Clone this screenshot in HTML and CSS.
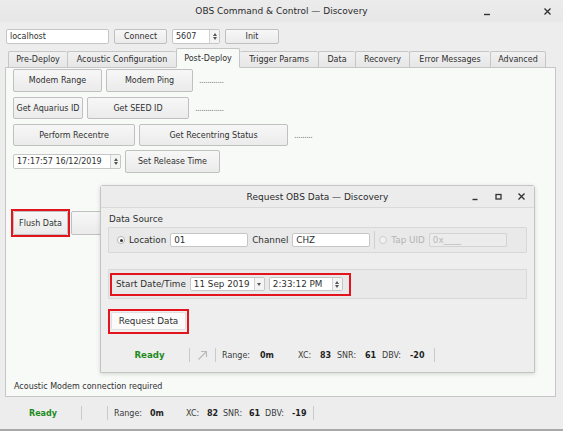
FILE: index.html
```html
<!DOCTYPE html>
<html lang="en">

<head>
    <meta charset="UTF-8">
    <title>OBS Command &amp; Control — Discovery</title>
    <link rel="stylesheet" href="styles.css">
</head>

<body>
    <div class="window">
        <!-- title bar -->
        <header class="titlebar">
            <span></span>
            <span class="title">OBS Command &amp; Control — Discovery</span>
            <span class="wctl">
                <svg width="9" height="9" viewBox="0 0 9 9"><path d="M1 7.5h6" stroke="#333" stroke-width="1.4"/></svg>
                <svg width="9" height="9" viewBox="0 0 9 9"><path d="M1.5 1.5l6 6M7.5 1.5l-6 6" stroke="#333" stroke-width="1.4"/></svg>
            </span>
        </header>

        <!-- connection row -->
        <div class="toolbar">
            <div class="field host">localhost</div>
            <div class="btn connect">Connect</div>
            <div class="spin port">
                <span class="val">5607</span>
                <span class="arrows"><i class="up"></i><i class="down"></i></span>
            </div>
            <div class="btn init">Init</div>
        </div>

        <!-- tabs -->
        <nav class="tabs">
            <span class="tab t59">Pre-Deploy</span>
            <span class="tab t109">Acoustic Configuration</span>
            <span class="tab on t64">Post-Deploy</span>
            <span class="tab t78">Trigger Params</span>
            <span class="tab t37">Data</span>
            <span class="tab t54">Recovery</span>
            <span class="tab t81">Error Messages</span>
            <span class="tab t56">Advanced</span>
        </nav>

        <section class="pane">
            <div class="row">
                <div class="btn w89">Modem Range</div>
                <div class="btn w87">Modem Ping</div>
                <span class="dots">............</span>
            </div>
            <div class="row r22">
                <div class="btn w70">Get Aquarius ID</div>
                <div class="btn w102">Get SEED ID</div>
                <span class="dots">..............</span>
            </div>
            <div class="row r22">
                <div class="btn w122">Perform Recentre</div>
                <div class="btn w149">Get Recentring Status</div>
                <span class="dots">.........</span>
            </div>
            <div class="row">
                <div class="spin dt">
                    <span class="val">17:17:57 16/12/2019</span>
                    <span class="arrows"><i class="up"></i><i class="down"></i></span>
                </div>
                <div class="btn w95">Set Release Time</div>
            </div>
            <div class="row flush">
                <div class="mark">
                    <div class="btn w55">Flush Data</div>
                </div>
                <div class="btn w60"></div>
            </div>
            <p class="note">Acoustic Modem connection required</p>
        </section>

        <!-- main status bar -->
        <footer class="status">
            <span class="ready">Ready</span>
            <span class="cell blank"></span>
            <span class="cell vals">
                <span class="k w36">Range:</span><b class="w36">0m</b>
                <span class="k w21">XC:</span><b class="w16">82</b>
                <span class="k w26">SNR:</span><b class="w16">61</b>
                <span class="k w27">DBV:</span><b class="w19">-19</b>
            </span>
        </footer>

        <!-- floating dialog -->
        <div class="dialog">
            <header class="dtitle">
                <span></span>
                <span class="title">Request OBS Data — Discovery</span>
                <span class="wctl">
                    <svg width="9" height="9" viewBox="0 0 9 9"><path d="M1.5 7.5h5" stroke="#333" stroke-width="1.4"/></svg>
                    <svg width="9" height="9" viewBox="0 0 9 9"><rect x="2" y="2.5" width="5" height="4.5" fill="none" stroke="#333" stroke-width="1.3"/></svg>
                    <svg width="9" height="9" viewBox="0 0 9 9"><path d="M1.5 1.5l6 6M7.5 1.5l-6 6" stroke="#333" stroke-width="1.4"/></svg>
                </span>
            </header>
            <div class="dbody">
                <div class="glabel">Data Source</div>
                <div class="frame src">
                    <span class="radio on"></span>
                    <span class="lbl">Location</span>
                    <div class="field w78">01</div>
                    <span class="lbl">Channel</span>
                    <div class="field w78">CHZ</div>
                    <span class="vsep"></span>
                    <span class="radio off"></span>
                    <span class="lbl dis">Tap UID</span>
                    <div class="field w78 dis">0x____</div>
                </div>
                <div class="frame when">
                    <div class="mark mdate">
                        <span class="lbl">Start Date/Time</span>
                        <div class="combo">
                            <span class="val">11 Sep 2019</span>
                            <span class="drop"><i class="down"></i></span>
                        </div>
                        <div class="spin tm">
                            <span class="val">2:33:12 PM</span>
                            <span class="arrows"><i class="up"></i><i class="down"></i></span>
                        </div>
                    </div>
                </div>
                <div class="mark mreq">
                    <div class="btn req">Request Data</div>
                </div>
                <div class="dstatus">
                    <span class="ready">Ready</span>
                    <span class="cell ico">
                        <svg width="11" height="11" viewBox="0 0 11 11"><path d="M1.5 9.5l8-8M4 1.5h5.5V7" fill="none" stroke="#b9b9b9" stroke-width="1.1"/></svg>
                    </span>
                    <span class="cell vals">
                        <span class="k w38">Range:</span><b class="w38">0m</b>
                        <span class="k w22">XC:</span><b class="w17">83</b>
                        <span class="k w28">SNR:</span><b class="w17">61</b>
                        <span class="k w28">DBV:</span><b class="w22">-20</b>
                    </span>
                </div>
            </div>
        </div>
    </div>
</body>

</html>
```

FILE: styles.css
```css
* {
    margin: 0;
    padding: 0;
    box-sizing: border-box;
}

body {
    width: 563px;
    height: 431px;
    overflow: hidden;
    font-family: "DejaVu Sans", "Liberation Sans", sans-serif;
    font-size: 8px;
    color: #2f3030;
    background-color: #ededed;
}

.window {
    position: relative;
    height: 431px;
    display: flex;
    flex-direction: column;
    border-bottom: 2px solid #a9a9a9;
}

/* title bars */

.titlebar,
.dtitle {
    display: grid;
    grid-template-columns: 1fr auto 1fr;
    align-items: center;
    font-size: 9px;
    color: #2a2a2a;
}

.titlebar {
    height: 22px;
    background: linear-gradient(#ececec, #e7e7e7);
}

.wctl {
    display: flex;
    justify-content: flex-end;
    align-items: center;
}

.titlebar .wctl {
    gap: 51px;
    padding-right: 11px;
}

/* common widgets */

.btn {
    display: flex;
    align-items: center;
    justify-content: center;
    height: 100%;
    border: 1px solid #c0c0c0;
    border-radius: 2px;
    background: linear-gradient(#f7f7f7, #ebebeb);
    white-space: nowrap;
}

.field {
    display: flex;
    align-items: center;
    height: 14px;
    padding-left: 3px;
    background-color: #fff;
    border: 1px solid #c6c6c6;
    border-radius: 2px;
}

.field.dis {
    background-color: #ececec;
    border-color: #d3d3d3;
    color: #b8b8b8;
}

.spin,
.combo {
    display: flex;
    align-items: stretch;
    height: 14px;
    background-color: #fff;
    border: 1px solid #c6c6c6;
    border-radius: 2px;
}

.spin .val,
.combo .val {
    flex: 1;
    display: flex;
    align-items: center;
    padding-left: 3px;
}

.arrows,
.drop {
    width: 10px;
    border-left: 1px solid #d2d2d2;
    display: flex;
    flex-direction: column;
    align-items: center;
    justify-content: center;
    gap: 1px;
    background-color: #f4f4f4;
}

.up,
.down {
    display: block;
    width: 0;
    height: 0;
    border-left: 2.5px solid transparent;
    border-right: 2.5px solid transparent;
}

.up {
    border-bottom: 3px solid #555;
}

.down {
    border-top: 3px solid #555;
}

.mark {
    border: 2px solid #e4141f;
}

/* connection row */

.toolbar {
    display: flex;
    gap: 5px;
    height: 15px;
    margin: 7px 0 0 6px;
}

.host {
    width: 103px;
    height: 15px;
}

.connect {
    width: 53px;
}

.port {
    width: 48px;
    height: 15px;
}

.init {
    width: 54px;
}

/* tabs */

.tabs {
    display: flex;
    align-items: flex-end;
    height: 22px;
    margin-top: 1px;
    padding-left: 8px;
    position: relative;
    z-index: 1;
}

.tab {
    height: 17px;
    margin-bottom: -1px;
    display: flex;
    align-items: center;
    justify-content: center;
    border: 1px solid #c6c6c6;
    border-right: none;
    border-radius: 2px 2px 0 0;
    background: linear-gradient(#f1f1f1, #e6e6e6);
    white-space: nowrap;
}

.tab:last-child {
    border-right: 1px solid #c6c6c6;
}

.tab.on {
    height: 20px;
    background: #f8faf8;
    border-bottom-color: #f8faf8;
    border-right: 1px solid #c6c6c6;
}

.tab.on + .tab {
    border-left: none;
}

.t37 { width: 37px; }
.t54 { width: 54px; }
.t56 { width: 56px; }
.t59 { width: 59px; }
.t64 { width: 64px; }
.t78 { width: 78px; }
.t81 { width: 81px; }
.t109 { width: 109px; }

.pane {
    height: 330px;
    margin: 0 7px 0 5px;
    padding: 1px 0 0 7px;
    border: 1px solid #c6c6c6;
    background-color: #f8faf8;
    display: flex;
    flex-direction: column;
    gap: 4px;
}

.row {
    display: flex;
    align-items: center;
    gap: 4px;
    height: 23px;
}

.row.r22 {
    height: 22px;
    margin-top: 1px;
}

.dots {
    margin-left: 2px;
    color: #777;
    letter-spacing: -0.5px;
}

.dt {
    width: 108px;
    height: 15px;
}

.flush {
    height: 28px;
    margin-top: 32px;
    gap: 1px;
    margin-left: -2px;
}

.flush .mark {
    height: 28px;
}

.flush .w60 {
    height: 24px;
}

.note {
    margin-top: auto;
    margin-bottom: 5px;
    margin-left: 1px;
}

.w55 { width: 55px; }
.w60 { width: 60px; }
.w70 { width: 70px; }
.w78 { width: 78px; }
.w87 { width: 87px; }
.w89 { width: 89px; }
.w95 { width: 95px; }
.w102 { width: 102px; }
.w122 { width: 122px; }
.w149 { width: 149px; }

/* status bars */

.status,
.dstatus {
    display: flex;
    align-items: center;
}

.status {
    flex: 1;
    padding-left: 5px;
}

.ready {
    color: #1d8a1d;
    font-weight: bold;
    text-align: center;
}

.status .ready {
    width: 76px;
}

.cell {
    height: 14px;
    border-left: 1px solid #cacaca;
    display: flex;
    align-items: center;
}

.blank {
    width: 26px;
}

.vals {
    padding-left: 6px;
    padding-right: 2px;
    border-right: 1px solid #cacaca;
}

.vals .k,
.vals b {
    display: inline-block;
}

.vals .k {
    color: #3a3a3a;
}

.vals b {
    color: #1f1f1f;
}

.w16 { width: 16px; }
.w17 { width: 17px; }
.w19 { width: 19px; }
.w21 { width: 21px; }
.w22 { width: 22px; }
.w26 { width: 26px; }
.w27 { width: 27px; }
.w28 { width: 28px; }
.w36 { width: 36px; }
.w38 { width: 38px; }

/* dialog */

.dialog {
    position: absolute;
    left: 100px;
    top: 185px;
    width: 435px;
    height: 188px;
    background-color: #eeeeee;
    border: 1px solid #c4c4c4;
    border-radius: 3px 3px 0 0;
    box-shadow: 0 1px 4px rgba(0, 0, 0, 0.15);
    display: flex;
    flex-direction: column;
    z-index: 2;
}

.dtitle {
    height: 22px;
    border-bottom: 1px solid #dadada;
    background-color: #ececec;
}

.dtitle .wctl {
    gap: 14px;
    padding-right: 8px;
}

.dbody {
    flex: 1;
    padding: 6px 7px 0 7px;
    display: flex;
    flex-direction: column;
    font-size: 8.8px;
}

.glabel {
    height: 13px;
    padding-left: 1px;
}

.frame {
    display: flex;
    align-items: center;
    border: 1px solid #d8d8d8;
    background-color: #e9e9e9;
    border-radius: 1px;
}

.src {
    height: 26px;
    padding-left: 8px;
    gap: 4px;
}

.lbl.dis {
    color: #b4b4b4;
}

.radio {
    width: 8px;
    height: 8px;
    border-radius: 50%;
    border: 1px solid #b4b4b4;
    background-color: #fff;
    display: flex;
    align-items: center;
    justify-content: center;
}

.radio.on::after {
    content: "";
    width: 3px;
    height: 3px;
    border-radius: 50%;
    background-color: #333;
}

.radio.off {
    border-color: #cdcdcd;
    background-color: #f1f1f1;
}

.vsep {
    width: 1px;
    height: 18px;
    background-color: #cfcfcf;
}

.when {
    height: 30px;
    margin-top: 16px;
    padding-left: 1px;
}

.mdate {
    height: 23px;
    display: flex;
    align-items: center;
    gap: 4px;
    padding: 0 6px 0 4px;
}

.combo {
    width: 75px;
}

.tm {
    width: 74px;
}

.mreq {
    width: 81px;
    height: 25px;
    margin-top: 10px;
    padding: 1px 1px 2px 1px;
}

.btn.req {
    background: #fbfbfb;
    border-color: #e0e0e0;
}

.dstatus {
    height: 24px;
    margin-top: 9px;
    padding-left: 2px;
    font-size: 8px;
}

.dstatus .ready {
    width: 79px;
    font-size: 8.6px;
}

.ico {
    width: 26px;
    justify-content: center;
}
```
